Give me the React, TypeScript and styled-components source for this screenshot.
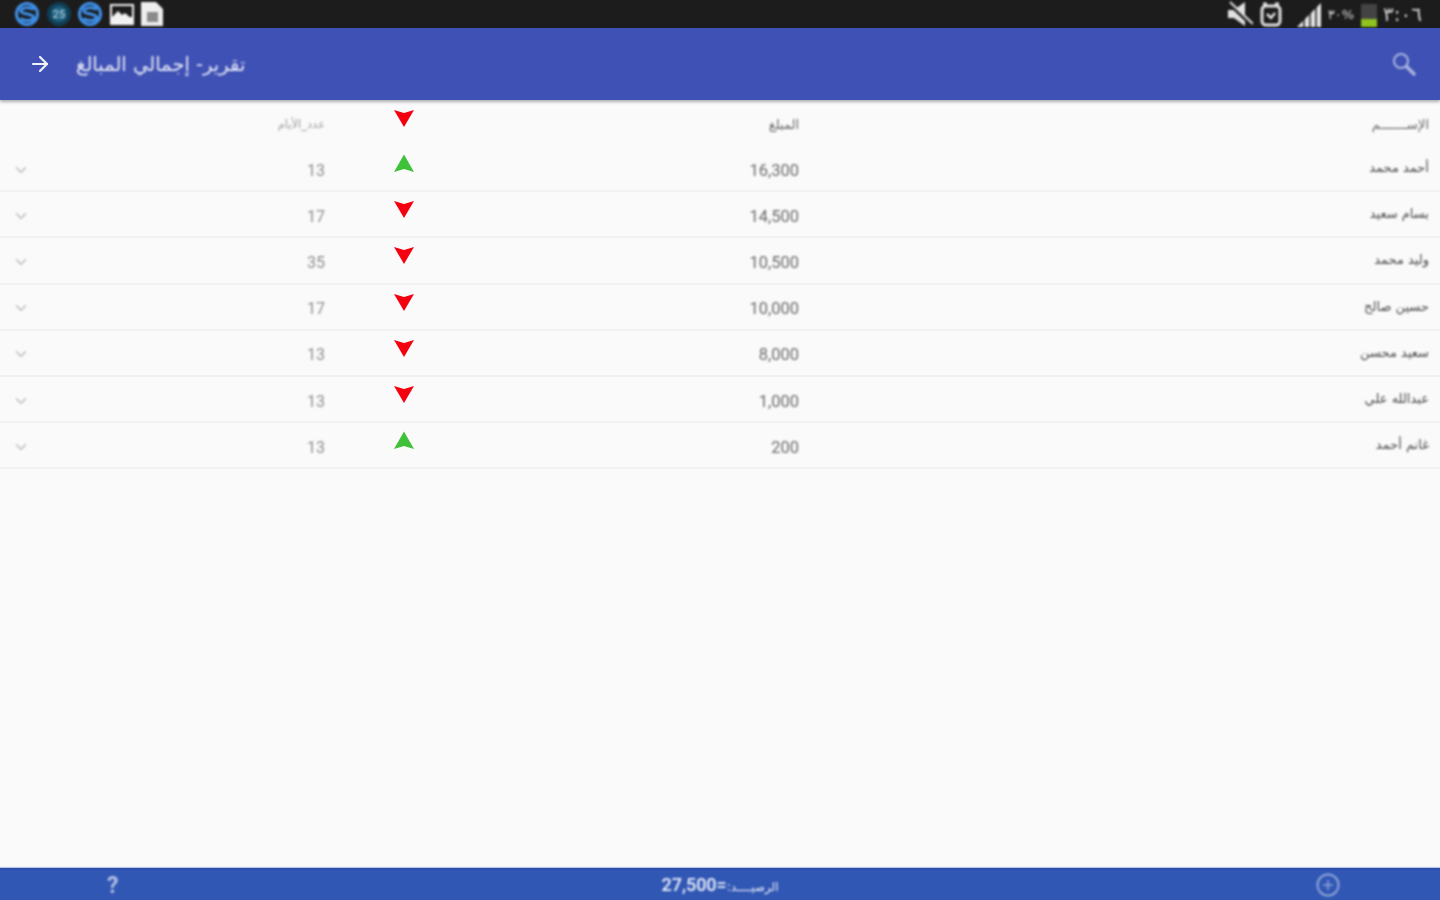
import React from "react";
import styled, { createGlobalStyle } from "styled-components";
import { ArrowRight, ChevronDown } from "lucide-react";

interface Row {
  name: string;
  amount: string;
  up: boolean;
  days: string;
}

const rows: Row[] = [
  { name: "أحمد محمد", amount: "16,300", up: true, days: "13" },
  { name: "بسام سعيد", amount: "14,500", up: false, days: "17" },
  { name: "وليد محمد", amount: "10,500", up: false, days: "35" },
  { name: "حسين صالح", amount: "10,000", up: false, days: "17" },
  { name: "سعيد محسن", amount: "8,000", up: false, days: "13" },
  { name: "عبدالله علي", amount: "1,000", up: false, days: "13" },
  { name: "غانم أحمد", amount: "200", up: true, days: "13" },
];

const GlobalStyle = createGlobalStyle`
  html, body {
    margin: 0;
    padding: 0;
    background: #fafafa;
  }
`;

const Page = styled.div`
  width: 1440px;
  height: 900px;
  display: flex;
  flex-direction: column;
  overflow: hidden;
  background: #fafafa;
  font-family: "Roboto", "DejaVu Sans", sans-serif;
`;

const StatusBar = styled.div`
  height: 28px;
  flex: none;
  background: #1c1c1c;
  display: flex;
  align-items: center;
  justify-content: space-between;
  padding: 0 18px 0 14px;
`;

const StatusGroup = styled.div`
  display: flex;
  align-items: center;
  gap: 5.5px;
  filter: blur(0.8px);
`;

const StatusText = styled.span<{ $size: number }>`
  color: #d8d8d8;
  font-size: ${(p) => p.$size}px;
  font-weight: 500;
  font-family: "DejaVu Sans", sans-serif;
`;

const AppBar = styled.header`
  height: 72px;
  flex: none;
  background: #3f51b5;
  box-shadow: 0 2px 3px rgba(0, 0, 0, 0.3);
  position: relative;
  display: flex;
  align-items: center;
  justify-content: space-between;
  padding: 0 23px 0 28px;
  color: #e4e7f5;
`;

const TitleGroup = styled.div`
  display: flex;
  align-items: center;
  gap: 24px;
`;

const Title = styled.h1`
  margin: 0;
  font-family: "DejaVu Sans", sans-serif;
  font-size: 19.500px;
  font-weight: 400;
  color: #e6e9f7;
  direction: rtl;
  filter: blur(0.8px);
`;

const Table = styled.main`
  flex: 1;
  display: flex;
  flex-direction: column;
`;

const GridRow = styled.div<{ $header?: boolean }>`
  height: ${(p) => (p.$header ? 46 : 46.2)}px;
  box-sizing: border-box;
  flex: none;
  display: grid;
  grid-template-columns: 42px 283px 158px 316px 1fr;
  align-items: center;
  padding-right: 11px;
  border-bottom: ${(p) => (p.$header ? "none" : "2px solid #f1f1f1")};
`;

const ChevronCell = styled.div`
  display: flex;
  justify-content: center;
  margin-top: 3px;
  color: #b4b4b4;
  filter: blur(0.8px);
`;

const NumberCell = styled.div<{ $light?: boolean }>`
  text-align: right;
  font-size: ${(p) => (p.$light ? 16 : 16.5)}px;
  color: ${(p) => (p.$light ? "#8e8e8e" : "#6a6a6a")};
  padding-top: 4px;
  filter: blur(0.8px);
`;

const ArrowCell = styled.div`
  display: flex;
  justify-content: center;
  margin-top: -10px;
`;

const ColumnLabel = styled.div<{ $size: number; $light?: boolean }>`
  text-align: right;
  direction: rtl;
  padding-top: 2px;
  font-family: "DejaVu Sans", sans-serif;
  font-size: ${(p) => p.$size}px;
  color: ${(p) => (p.$light ? "#a0a0a0" : "#6a6a6a")};
  filter: blur(0.8px);
`;

const NameCell = styled.div`
  text-align: right;
  direction: rtl;
  font-family: "DejaVu Sans", sans-serif;
  font-size: 13px;
  color: #4d4d4d;
  padding-bottom: 1px;
  filter: blur(0.8px);
`;

const Footer = styled.footer`
  height: 32px;
  flex: none;
  box-sizing: border-box;
  background: #3157b5;
  border-top: 2px solid #2c4fae;
  box-shadow: 0 -1px 1px #b9c6e8;
  display: grid;
  grid-template-columns: 1fr 1fr 1fr;
  align-items: center;
  color: #eef2fb;
`;

const HelpMark = styled.span`
  justify-self: start;
  margin-left: 107px;
  font-size: 23px;
  font-weight: 700;
  color: #b4c2e4;
  line-height: 1;
  filter: blur(0.8px);
`;

const Balance = styled.div`
  justify-self: center;
  font-size: 18px;
  font-weight: 500;
  display: flex;
  align-items: baseline;
  margin-top: -2px;
  filter: blur(0.8px);
`;

const BalanceLabel = styled.span`
  font-family: "DejaVu Sans", sans-serif;
  font-size: 12px;
  direction: rtl;
`;

const AddCell = styled.div`
  justify-self: end;
  margin-right: 99px;
  display: flex;
  color: #8fa4d6;
  filter: blur(0.8px);
`;

const SkypeIcon = () => (
  <svg width="26" height="26" viewBox="0 0 26 26" fill="none">
    <circle cx="13" cy="13" r="10.5" stroke="#3f92ec" strokeWidth="3" />
    <path d="M20 8.500C15 5 6 7 7 10.500c1 3 12 2 12.500 5.500.5 3.500-8 5-13 1.500" stroke="#3f92ec" strokeWidth="3" />
  </svg>
);

const BadgeIcon = () => (
  <svg width="26" height="26" viewBox="0 0 26 26">
    <circle cx="13" cy="13" r="12" fill="#123e56" />
    <circle cx="13" cy="13" r="8" fill="#1c5f7e" />
    <text x="13" y="17" textAnchor="middle" fontSize="11" fontFamily="Roboto" fill="#cfe4ee">25</text>
  </svg>
);

const PictureIcon = () => (
  <svg width="26" height="26" viewBox="0 0 26 26">
    <rect x="1" y="3" width="24" height="21" fill="#f2f2f2" />
    <rect x="3" y="5" width="20" height="11" fill="#1c1c1c" />
    <path d="M3 16l6-6 4 4 3-2 7 6v2H3z" fill="#f2f2f2" />
  </svg>
);

const DocIcon = () => (
  <svg width="24" height="26" viewBox="0 0 24 26">
    <path d="M1 1h15l7 7v17H1z" fill="#eee" />
    <rect x="7" y="11" width="11" height="10" fill="#8a8a8a" />
  </svg>
);

const MuteIcon = () => (
  <svg width="26" height="26" viewBox="0 0 26 26">
    <path d="M1 9h6l11-8v24L7 17H1z" fill="#e2e2e2" />
    <path d="M3 3l22 21" stroke="#1c1c1c" strokeWidth="4" />
    <path d="M3 1l23 22" stroke="#e2e2e2" strokeWidth="2" />
  </svg>
);

const AlarmIcon = () => (
  <svg width="24" height="26" viewBox="0 0 24 26" fill="none" stroke="#e2e2e2">
    <rect x="3" y="5" width="18" height="19" rx="4" strokeWidth="3" />
    <path d="M4 3h4M16 3h4" strokeWidth="3" />
    <path d="M8 13l4 4 4-5" strokeWidth="2.500" />
  </svg>
);

const SignalIcon = () => (
  <svg width="34" height="26" viewBox="-8 0 34 26">
    <path d="M1 26L25 2v24z" fill="#e6e6e6" />
    <path d="M8 26V15M14 26V9M20 26V3" stroke="#1c1c1c" strokeWidth="1.500" />
  </svg>
);

const BatteryIcon = () => (
  <svg width="18" height="26" viewBox="0 0 18 26">
    <rect x="1" y="3" width="16" height="23" fill="#444" />
    <rect x="1" y="18" width="16" height="8" fill="#8fc31f" />
  </svg>
);

const SearchIcon = () => (
  <svg width="26" height="26" viewBox="0 0 26 26" fill="none" stroke="#aab5df" style={{ filter: "blur(0.8px)" }}>
    <circle cx="10" cy="10" r="7" strokeWidth="2" />
    <path d="M15.500 15.500L23 23" strokeWidth="3.500" strokeLinecap="round" />
  </svg>
);

const TriangleArrow = ({ up }: { up: boolean }) => (
  <svg width="22" height="20" viewBox="0 0 22 20">
    {up ? (
      <path d="M11 1.500L21 19 11 16 1 19z" fill="#3fc13a" />
    ) : (
      <path d="M1 2L11 5 21 2 11 19z" fill="#f5000f" />
    )}
  </svg>
);

const AddIcon = () => (
  <svg width="26" height="26" viewBox="0 0 26 26" fill="none" stroke="currentColor">
    <circle cx="13" cy="13" r="10.5" strokeWidth="2" />
    <path d="M8 13h10M13 8v10" strokeWidth="1.500" />
  </svg>
);

export default function App() {
  return (
    <Page>
      <GlobalStyle />
      <StatusBar>
        <StatusGroup>
          <SkypeIcon />
          <BadgeIcon />
          <SkypeIcon />
          <PictureIcon />
          <DocIcon />
        </StatusGroup>
        <StatusGroup>
          <MuteIcon />
          <AlarmIcon />
          <SignalIcon />
          <StatusText $size={13}>٣٠%</StatusText>
          <BatteryIcon />
          <StatusText $size={20}>٣:٠٦</StatusText>
        </StatusGroup>
      </StatusBar>

      <AppBar>
        <TitleGroup>
          <ArrowRight size={24} strokeWidth={2.2} color="#f0f2fa" />
          <Title>تقرير- إجمالي المبالغ</Title>
        </TitleGroup>
        <SearchIcon />
      </AppBar>

      <Table>
        <GridRow $header>
          <span />
          <ColumnLabel $light $size={11.5}>عدد_الأيام</ColumnLabel>
          <ArrowCell>
            <TriangleArrow up={false} />
          </ArrowCell>
          <ColumnLabel $size={13}>المبلغ</ColumnLabel>
          <ColumnLabel $size={13}>الإســـــــم</ColumnLabel>
        </GridRow>
        {rows.map((row) => (
          <GridRow key={row.name}>
            <ChevronCell>
              <ChevronDown size={18} strokeWidth={1.6} />
            </ChevronCell>
            <NumberCell $light>{row.days}</NumberCell>
            <ArrowCell>
              <TriangleArrow up={row.up} />
            </ArrowCell>
            <NumberCell>{row.amount}</NumberCell>
            <NameCell>{row.name}</NameCell>
          </GridRow>
        ))}
      </Table>

      <Footer>
        <HelpMark>?</HelpMark>
        <Balance>
          27,500=
          <BalanceLabel>الرصيــــد:</BalanceLabel>
        </Balance>
        <AddCell>
          <AddIcon />
        </AddCell>
      </Footer>
    </Page>
  );
}
